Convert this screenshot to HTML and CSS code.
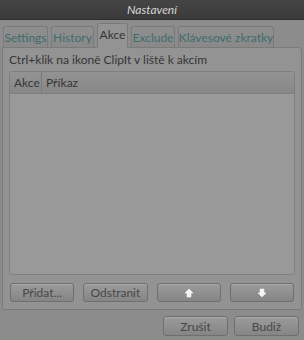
FILE: index.html
```html
<!DOCTYPE html>
<html>
<head>
<meta charset="utf-8">
<link rel="stylesheet" href="styles.css">
</head>
<body>
<div class="window">
  <div class="titlebar">Nastavení</div>
  <div class="body">
    <div class="tabs">
      <div class="tab t1">Settings</div>
      <div class="tab t2">History</div>
      <div class="tab active t3">Akce</div>
      <div class="tab t4">Exclude</div>
      <div class="tab t5">Klávesové zkratky</div>
    </div>
    <div class="panel">
      <div class="hint">Ctrl+klik na ikoně ClipIt v liště k akcím</div>
      <div class="table">
        <div class="thead">
          <div class="th c1">Akce</div>
          <div class="th c2">Příkaz</div>
        </div>
        <div class="tbody"></div>
      </div>
      <div class="btnrow">
        <button class="btn">Přidat...</button>
        <button class="btn">Odstranit</button>
        <button class="btn"><svg width="10" height="10" viewBox="0 0 10 10"><path d="M5 1 L9 5 L7 5 L7 9 L3 9 L3 5 L1 5 Z" fill="#f4f4f4" stroke="#f4f4f4" stroke-width="0.6" stroke-linejoin="round"/></svg></button>
        <button class="btn"><svg width="10" height="10" viewBox="0 0 10 10"><path d="M5 9 L9 5 L7 5 L7 1 L3 1 L3 5 L1 5 Z" fill="#f4f4f4" stroke="#f4f4f4" stroke-width="0.6" stroke-linejoin="round"/></svg></button>
      </div>
    </div>
    <div class="footer">
      <button class="btn fbtn">Zrušit</button>
      <button class="btn fbtn">Budiž</button>
    </div>
  </div>
</div>
</body>
</html>
```
FILE: styles.css
```css
html, body {
  margin: 0;
  padding: 0;
  background: #8c8c8c;
}
.window {
  width: 304px;
  height: 340px;
  font-family: "Lato", sans-serif;
  font-size: 12px;
  color: #363636;
  overflow: hidden;
}
.titlebar {
  height: 20px;
  background: linear-gradient(#454545, #3a3a3a);
  color: #d6d6d6;
  font-style: italic;
  font-size: 12px;
  display: flex;
  align-items: center;
  justify-content: center;
  border-bottom: 1px solid #2e2e2e;
  box-sizing: border-box;
}
.body {
  padding: 0 2px 0 2px;
}
.tabs {
  display: flex;
  align-items: flex-end;
  height: 27px;
  padding-left: 1px;
  gap: 3px;
  position: relative;
  z-index: 1;
}
.tab {
  height: 21px;
  box-sizing: border-box;
  border: 1px solid #7a7a7a;
  border-bottom: none;
  border-radius: 3px 3px 0 0;
  background: linear-gradient(#8f8f8f, #898989);
  color: #3d6c6c;
  display: flex;
  align-items: center;
  justify-content: center;
  white-space: nowrap;
  padding-top: 1px;
}
.tab.active {
  height: 25px;
  background: #939393;
  color: #333;
  margin-bottom: -1px;
  padding-bottom: 3px;
  padding-top: 0;
}
.t1 { width: 45px; }
.t2 { width: 43px; }
.t3 { width: 31px; }
.t4 { width: 44px; }
.t5 { width: 96px; }
.panel {
  height: 263px;
  box-sizing: border-box;
  border: 1px solid #7a7a7a;
  border-radius: 0 3px 3px 3px;
  background: #939393;
  padding: 0 6px 0 6px;
}
.hint {
  height: 23px;
  display: flex;
  align-items: center;
}
.table {
  height: 204px;
  box-sizing: border-box;
  border: 1px solid #7f7f7f;
  border-radius: 3px;
  background: #999999;
  display: flex;
  flex-direction: column;
  overflow: hidden;
}
.thead {
  height: 22px;
  display: flex;
  background: linear-gradient(#939393, #878787);
  border-bottom: 1px solid #7f7f7f;
  flex-shrink: 0;
  box-sizing: border-box;
}
.th {
  display: flex;
  align-items: center;
  padding-left: 4px;
}
.c1 {
  width: 27px;
  border-right: 1px solid #7a7a7a;
}
.tbody {
  flex: 1;
}
.btnrow {
  display: flex;
  gap: 9px;
  margin-top: 8px;
  padding: 0 1px;
}
.btn {
  width: 65px;
  height: 19px;
  box-sizing: border-box;
  border: 1px solid #6f6f6f;
  border-radius: 3px;
  background: linear-gradient(#9b9b9b, #858585);
  font-family: "Lato", sans-serif;
  font-size: 12px;
  color: #474747;
  padding: 0;
  display: flex;
  align-items: center;
  justify-content: center;
  box-shadow: inset 0 1px 0 #a8a8a8;
}
.footer {
  display: flex;
  justify-content: flex-end;
  gap: 6px;
  padding-right: 3px;
  margin-top: 6px;
}
.fbtn {
  height: 20px;
}
```
